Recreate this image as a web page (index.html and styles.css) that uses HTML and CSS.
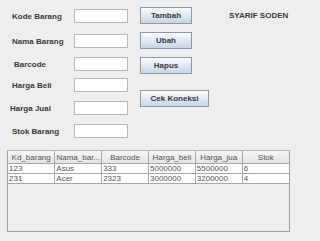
FILE: index.html
```html
<!DOCTYPE html>
<html lang="id">
<head>
    <meta charset="UTF-8">
    <title>Data Barang</title>
    <link rel="stylesheet" href="styles.css">
</head>
<body>

    <div class="window">
        <!-- form input barang -->
        <div class="top">
            <div class="form">
                <label class="field-label">Kode Barang</label>
                <input class="text-field" type="text">
                <label class="field-label lower">Nama Barang</label>
                <input class="text-field lower" type="text">
                <label class="field-label shift-right">Barcode</label>
                <input class="text-field" type="text">
                <label class="field-label higher">Harga Beli</label>
                <input class="text-field higher" type="text">
                <label class="field-label shift-left">Harga Jual</label>
                <input class="text-field" type="text">
                <label class="field-label">Stok Barang</label>
                <input class="text-field" type="text">
            </div>

            <div class="actions">
                <button class="btn">Tambah</button>
                <button class="btn">Ubah</button>
                <button class="btn">Hapus</button>
                <button class="btn wide">Cek Koneksi</button>
            </div>

            <div class="author">SYARIF SODEN</div>
        </div>

        <!-- tabel barang -->
        <div class="table-pane">
            <table class="grid">
                <thead>
                    <tr>
                        <th>Kd_barang</th>
                        <th>Nama_bar...</th>
                        <th>Barcode</th>
                        <th>Harga_beli</th>
                        <th>Harga_jua</th>
                        <th>Stok</th>
                    </tr>
                </thead>
                <tbody>
                    <tr>
                        <td>123</td>
                        <td>Asus</td>
                        <td>333</td>
                        <td>5000000</td>
                        <td>5500000</td>
                        <td>6</td>
                    </tr>
                    <tr>
                        <td>231</td>
                        <td>Acer</td>
                        <td>2323</td>
                        <td>3000000</td>
                        <td>3200000</td>
                        <td>4</td>
                    </tr>
                </tbody>
            </table>
        </div>
    </div>

</body>
</html>
```

FILE: styles.css
```css
body, html {
    margin: 0;
    padding: 0;
    background-color: #eeeeee;
    font-family: "Liberation Sans", Arial, sans-serif;
    overflow: hidden;
}

.window {
    width: 320px;
    height: 241px;
    padding-top: 7px;
    box-sizing: border-box;
}

.top {
    display: flex;
    align-items: flex-start;
}

/* label + textfield */
.form {
    display: grid;
    grid-template-columns: 74px 54px;
    row-gap: 9px;
    padding-top: 2px;
    align-items: center;
}

.field-label {
    padding-left: 12px;
    font-size: 8px;
    font-weight: bold;
    color: #3a3a3a;
}

.shift-right {
    padding-left: 14px;
}

.shift-left {
    padding-left: 10px;
}

.lower {
    margin-top: 2px;
}

.higher {
    margin-top: -2px;
}

.text-field {
    width: 54px;
    height: 14px;
    padding: 0;
    box-sizing: border-box;
    border: 1px solid #b4b8bc;
    background-color: white;
}

/* tombol */
.actions {
    display: flex;
    flex-direction: column;
    align-items: flex-start;
    gap: 8px;
    margin-left: 12px;
}

.btn {
    width: 52px;
    height: 17px;
    padding: 0;
    border: 1px solid #8a9aaa;
    border-radius: 0;
    background: linear-gradient(#fbfcfd, #dde8f3 55%, #c6d6e6);
    font-family: "Liberation Sans", Arial, sans-serif;
    font-size: 8px;
    font-weight: bold;
    color: #3a3a3a;
}

.btn.wide {
    width: 69px;
    margin-top: 8px;
}

.author {
    margin-left: 20px;
    line-height: 17px;
    font-size: 8px;
    font-weight: bold;
    color: #3a3a3a;
}

/* tabel */
.table-pane {
    margin: 12px 0 0 7px;
    width: 283px;
    height: 82px;
    box-sizing: border-box;
    border: 1px solid #9aa4ae;
    border-top-color: #b0b6bc;
    background-color: #eeeeee;
}

.grid {
    width: 100%;
    border-collapse: collapse;
    table-layout: fixed;
    font-size: 8px;
    color: #555555;
}

.grid th {
    height: 12px;
    padding: 0;
    font-weight: normal;
    text-align: center;
    white-space: nowrap;
    overflow: hidden;
    background: linear-gradient(#f6f6f6, #e4e4e4);
    border-right: 1px solid #a8a8a8;
    border-bottom: 1px solid #a8a8a8;
}

.grid th:last-child {
    border-right: none;
}

.grid td {
    height: 9px;
    padding: 0 0 0 1px;
    line-height: 9px;
    white-space: nowrap;
    overflow: hidden;
    background-color: white;
    border-right: 1px solid #a8a8a8;
    border-bottom: 1px solid #a8a8a8;
}

.grid td:last-child {
    border-right: none;
}
```
